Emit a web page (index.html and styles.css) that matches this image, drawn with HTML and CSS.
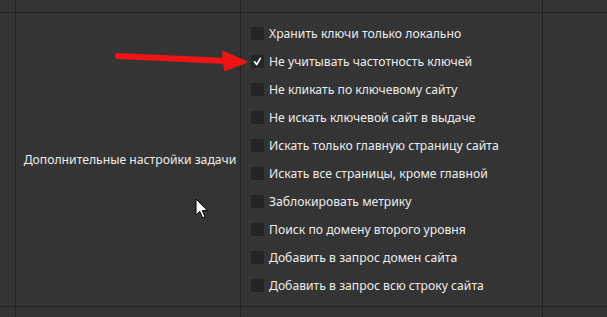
FILE: index.html
```html
<!DOCTYPE html>
<html lang="ru">
<head>
<meta charset="utf-8">
<link rel="stylesheet" href="styles.css">
</head>
<body>
<div class="table">
  <div class="cell"></div><div class="cell"></div><div class="cell"></div><div class="cell"></div>
  <div class="cell"></div>
  <div class="cell label">Дополнительные настройки задачи</div>
  <div class="cell options">
    <div class="opt"><span class="box"></span><span>Хранить ключи только локально</span></div>
    <div class="opt"><span class="box checked"><svg viewBox="0 0 13 13" width="13" height="13"><path d="M3.6 6.8 L5.6 9.6 L9.4 3.4" fill="none" stroke="#ffffff" stroke-width="1.7" stroke-linecap="round" stroke-linejoin="round"/></svg></span><span>Не учитывать частотность ключей</span></div>
    <div class="opt"><span class="box"></span><span>Не кликать по ключевому сайту</span></div>
    <div class="opt"><span class="box"></span><span>Не искать ключевой сайт в выдаче</span></div>
    <div class="opt"><span class="box"></span><span>Искать только главную страницу сайта</span></div>
    <div class="opt"><span class="box"></span><span>Искать все страницы, кроме главной</span></div>
    <div class="opt"><span class="box"></span><span>Заблокировать метрику</span></div>
    <div class="opt"><span class="box"></span><span>Поиск по домену второго уровня</span></div>
    <div class="opt"><span class="box"></span><span>Добавить в запрос домен сайта</span></div>
    <div class="opt"><span class="box"></span><span>Добавить в запрос всю строку сайта</span></div>
  </div>
  <div class="cell"></div>
  <div class="cell"></div><div class="cell"></div><div class="cell"></div><div class="cell"></div>
</div>
<svg class="arrow" width="140" height="24" viewBox="0 0 140 24">
  <path d="M3 6 L112 11" stroke="#f01414" stroke-width="6" stroke-linecap="round" fill="none"/>
  <path d="M108 2 L131 12 L110 20 Z" fill="#f01414" stroke="#f01414" stroke-width="2" stroke-linejoin="round"/>
</svg>
<svg class="cursor" width="14" height="22" viewBox="0 0 14 22">
  <path d="M1 1 L1 17 L4.8 13.4 L7.6 19.8 L10 18.8 L7.3 12.6 L12.4 12.6 Z" fill="#ffffff" stroke="#000000" stroke-width="1" stroke-linejoin="miter"/>
</svg>
</body>
</html>
```
FILE: styles.css
```css
html, body {
  margin: 0;
  padding: 0;
  background: #343434;
}
body {
  width: 607px;
  height: 317px;
  overflow: hidden;
  position: relative;
  font-family: "Noto Sans", "Open Sans", sans-serif;
  font-size: 12.2px;
  color: #ececec;
}
.table {
  display: grid;
  grid-template-columns: 15px 224px 301px 1fr;
  grid-template-rows: 12px 293px 20px;
  gap: 1px;
  background: #232323;
  width: 607px;
  height: 317px;
}
.cell {
  background: #343434;
}
.label {
  display: flex;
  align-items: center;
  justify-content: center;
  padding-left: 4px;
  white-space: nowrap;
}
.options {
  padding: 6px 0 0 10px;
  display: flex;
  flex-direction: column;
}
.opt {
  height: 28px;
  display: flex;
  align-items: center;
  gap: 5px;
  white-space: nowrap;
}
.box {
  width: 13px;
  height: 13px;
  background: #252525;
  flex: none;
  display: block;
}
.box svg {
  display: block;
}
.arrow {
  position: absolute;
  left: 115px;
  top: 50px;
}
.cursor {
  position: absolute;
  left: 195px;
  top: 198px;
}
```
